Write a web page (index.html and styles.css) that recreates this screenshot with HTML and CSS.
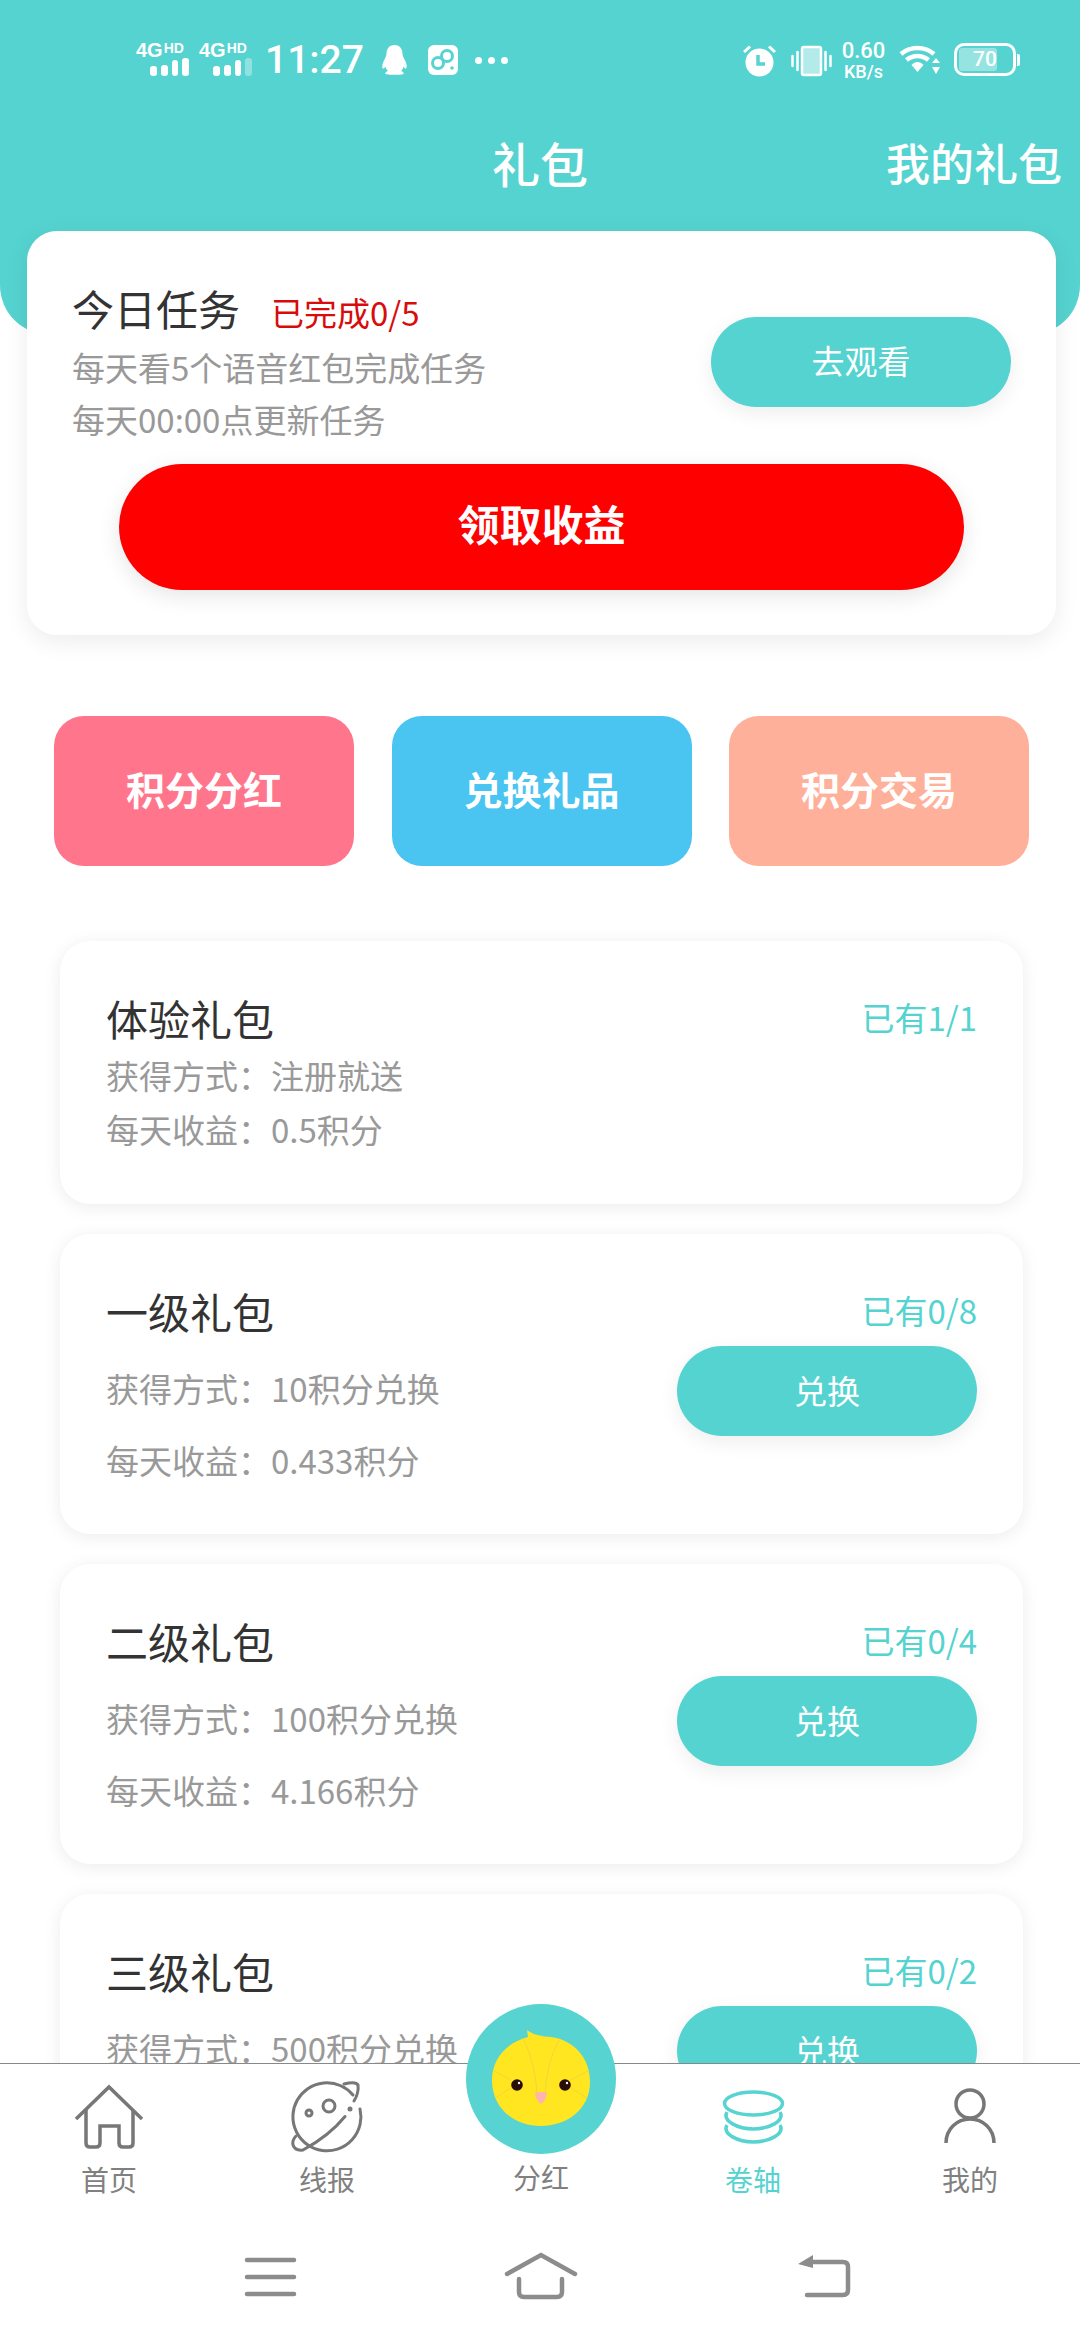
FILE: index.html
```html
<!DOCTYPE html>
<html lang="zh-CN">
<head>
    <meta charset="UTF-8">
    <meta name="viewport" content="width=device-width, initial-scale=1.0">
    <title>礼包</title>
    <link rel="stylesheet" href="styles.css">
</head>
<body>
<div class="page">
    <div class="scroll">
        <header class="header">
            <div class="status-bar">
                <div class="status-left">
                    <div class="signal">
                        <div class="signal-text">4G<span class="signal-hd">HD</span></div>
                        <div class="bars"><i class="b1"></i><i class="b2"></i><i class="b3"></i><i class="b4"></i></div>
                    </div>
                    <div class="signal">
                        <div class="signal-text">4G<span class="signal-hd">HD</span></div>
                        <div class="bars"><i class="b1"></i><i class="b2"></i><i class="b3"></i><i class="b4 dim"></i></div>
                    </div>
                    <span class="time">11:27</span>
                    <svg class="ic-qq" width="25" height="30" viewBox="0 0 25 30"><path fill="#fff" d="M12.5 0C18 0 20.500 4 20.500 9C20.500 11 22 13 23.500 16.500C25 20 25 23 24 23.500C23 24 22 22.500 21.500 21.500C21 23.500 20 25 19 26C21 26.500 22 27.500 21.500 29C21 30 4 30 3.500 29C3 27.500 4 26.500 6 26C5 25 4 23.500 3.500 21.500C3 22.500 2 24 1 23.500C0 23 0 20 1.500 16.500C3 13 4.500 11 4.500 9C4.500 4 7 0 12.500 0Z"/></svg>
                    <svg class="ic-app" width="30" height="30" viewBox="0 0 30 30"><rect width="30" height="30" rx="6" fill="#fff"/><circle cx="10" cy="18" r="5.500" fill="none" stroke="#57d4d1" stroke-width="3"/><circle cx="19" cy="11" r="5.500" fill="none" stroke="#57d4d1" stroke-width="3"/><circle cx="24" cy="23" r="1.800" fill="#57d4d1"/></svg>
                    <div class="dots"><i></i><i></i><i></i></div>
                </div>
                <div class="status-right">
                    <svg class="ic-alarm" width="33" height="32" viewBox="0 0 33 32"><circle cx="16.500" cy="17.500" r="14" fill="#fff"/><path d="M1 7L7 1.500M32 7L26 1.500" stroke="#fff" stroke-width="3"/><path d="M15 10V19H22" fill="none" stroke="#57d4d1" stroke-width="3.500"/></svg>
                    <svg class="ic-vibrate" width="41" height="32" viewBox="0 0 41 32"><rect x="11" y="2" width="19" height="28" rx="2" fill="#fff" fill-opacity=".55" stroke="#fff" stroke-width="2.500"/><path d="M1.500 11V21M6.500 7V25M34.500 7V25M39.500 11V21" stroke="#fff" stroke-width="2.500" stroke-linecap="round"/></svg>
                    <div class="speed"><span class="speed-num">0.60</span><span class="speed-unit">KB/s</span></div>
                    <svg class="ic-wifi" width="42" height="30" viewBox="0 0 42 30"><path d="M2 9C11 1 26 1 35 9M7.500 15C14 9.500 23 9.500 29.500 15" fill="none" stroke="#fff" stroke-width="4.500"/><path d="M12.500 20C16 16 21 16 24.500 20L18.500 27Z" fill="#fff"/><path d="M37 13L41 18H33ZM37 29L33 22H41Z" fill="#fff"/></svg>
                    <div class="battery">
                        <div class="battery-body"><div class="battery-fill"></div><span class="battery-num">70</span></div>
                        <div class="battery-nub"></div>
                    </div>
                </div>
            </div>
            <div class="title-bar">
                <h1 class="title">礼包</h1>
                <a class="title-link">我的礼包</a>
            </div>
        </header>

        <section class="task-card">
            <div class="task-row">
                <div class="task-info">
                    <div class="task-head"><span class="task-title">今日任务</span><span class="task-done">已完成0/5</span></div>
                    <p class="task-sub">每天看5个语音红包完成任务</p>
                    <p class="task-sub">每天00:00点更新任务</p>
                </div>
                <button class="btn-teal btn-watch">去观看</button>
            </div>
            <button class="btn-red">领取收益</button>
        </section>

        <nav class="tiles">
            <a class="tile tile-pink">积分分红</a>
            <a class="tile tile-blue">兑换礼品</a>
            <a class="tile tile-orange">积分交易</a>
        </nav>

        <section class="gift-list">
            <div class="gift-card gift-card-free">
                <div class="gift-head"><span class="gift-title">体验礼包</span><span class="gift-owned">已有1/1</span></div>
                <div class="gift-body">
                    <div class="gift-info">
                        <p class="gift-line">获得方式：注册就送</p>
                        <p class="gift-line">每天收益：0.5积分</p>
                    </div>
                </div>
            </div>
            <div class="gift-card">
                <div class="gift-head"><span class="gift-title">一级礼包</span><span class="gift-owned">已有0/8</span></div>
                <div class="gift-body">
                    <div class="gift-info">
                        <p class="gift-line">获得方式：10积分兑换</p>
                        <p class="gift-line">每天收益：0.433积分</p>
                    </div>
                    <button class="btn-teal btn-swap">兑换</button>
                </div>
            </div>
            <div class="gift-card">
                <div class="gift-head"><span class="gift-title">二级礼包</span><span class="gift-owned">已有0/4</span></div>
                <div class="gift-body">
                    <div class="gift-info">
                        <p class="gift-line">获得方式：100积分兑换</p>
                        <p class="gift-line">每天收益：4.166积分</p>
                    </div>
                    <button class="btn-teal btn-swap">兑换</button>
                </div>
            </div>
            <div class="gift-card">
                <div class="gift-head"><span class="gift-title">三级礼包</span><span class="gift-owned">已有0/2</span></div>
                <div class="gift-body">
                    <div class="gift-info">
                        <p class="gift-line">获得方式：500积分兑换</p>
                        <p class="gift-line">每天收益：20积分</p>
                    </div>
                    <button class="btn-teal btn-swap">兑换</button>
                </div>
            </div>
        </section>
    </div>

    <footer class="tabbar">
        <a class="tab">
            <svg class="tab-icon" width="80" height="70" viewBox="0 0 80 70" fill="none" stroke="#777" stroke-width="3.500">
                <path d="M7 36L40 4L73 36"/>
                <path d="M17 27V60q0 4 4 4h6q4 0 4-4V43H50V60q0 4 4 4h6q4 0 4-4V27"/>
            </svg>
            <span class="tab-label">首页</span>
        </a>
        <a class="tab">
            <svg class="tab-icon" width="80" height="70" viewBox="0 0 80 70" fill="none" stroke="#777" stroke-width="3" stroke-linecap="round">
                <path d="M66 12A34 34 0 1 0 73 26"/>
                <circle cx="42" cy="23" r="6"/>
                <circle cx="22" cy="30" r="3"/>
                <path d="M58 33.500Q42 53 16 67Q8 68 6 62Q5 57 9 53"/>
                <path d="M57 1Q69 -2 71 2Q72 10 67 18"/>
                <circle cx="63" cy="26" r="1" fill="#777"/>
            </svg>
            <span class="tab-label">线报</span>
        </a>
        <a class="tab tab-mid">
            <svg class="chick" width="150" height="150" viewBox="0 0 150 150">
                <circle cx="75" cy="75" r="75" fill="#57d4d1"/>
                <path fill="#ffe620" d="M61 26Q68 32 85 33C108 36 124 54 124 78C124 106 100 122 75 122C50 122 26 106 26 76C26 54 42 38 62 33Z"/>
                <path fill="none" stroke="#efd63c" stroke-width="1" d="M57 34Q70 60 71 92M93 36Q80 60 79 92M27 66L45 76M29 94L45 84M123 66L105 76M121 94L105 84"/>
                <circle cx="51" cy="81" r="5.800" fill="#2a0d05"/>
                <circle cx="99" cy="81" r="5.800" fill="#2a0d05"/>
                <circle cx="53" cy="79" r="1.200" fill="#fff"/>
                <circle cx="101" cy="79" r="1.200" fill="#fff"/>
                <path fill="#ffb3ae" d="M69 89Q75 87 81 89Q80 97 75 100Q70 97 69 89Z"/>
            </svg>
            <span class="tab-label">分红</span>
        </a>
        <a class="tab tab-active">
            <svg class="tab-icon" width="80" height="70" viewBox="0 0 80 70" fill="none" stroke="#57d4d1" stroke-width="3.500">
                <ellipse cx="40.500" cy="20.500" rx="29" ry="11.500"/>
                <path d="M14 29C9 38 25 46 40.500 46S72 38 67 29"/>
                <path d="M14 42C9 51 25 59 40.500 59S72 51 67 42"/>
            </svg>
            <span class="tab-label">卷轴</span>
        </a>
        <a class="tab">
            <svg class="tab-icon" width="80" height="70" viewBox="0 0 80 70" fill="none" stroke="#777" stroke-width="3.500">
                <circle cx="40" cy="21" r="14"/>
                <path d="M16 60C16 46 27 36 40 36S64 46 64 60"/>
            </svg>
            <span class="tab-label">我的</span>
        </a>
    </footer>

    <div class="navbar">
        <svg width="80" height="60" viewBox="0 0 80 60" fill="none" stroke="#8c8c8c" stroke-width="4.500" stroke-linecap="round">
            <path d="M17 13H64M17 30H64M17 47H64"/>
        </svg>
        <svg width="80" height="60" viewBox="0 0 80 60" fill="none" stroke="#8c8c8c" stroke-width="4.500" stroke-linecap="round">
            <path d="M6 27L40 8L74 27"/>
            <path d="M18 32V45q0 5 5 5H56q5 0 5-5V32"/>
        </svg>
        <svg width="80" height="60" viewBox="0 0 80 60" fill="none" stroke="#8c8c8c" stroke-width="4.500" stroke-linecap="round">
            <path d="M29 15H60q5 0 5 5V43q0 5-5 5H24"/>
            <path d="M15 17L30 8V21Z" fill="#8c8c8c" stroke="none"/>
        </svg>
    </div>
</div>
</body>
</html>
```

FILE: styles.css
```css
* {
    box-sizing: border-box;
}

body {
    margin: 0;
    padding: 0;
    background-color: #fff;
    font-family: "Noto Sans CJK SC", "Noto Sans", sans-serif;
    color: #333;
}

p,
h1 {
    margin: 0;
}

button {
    border: none;
    padding: 0;
    font-family: inherit;
}

.page {
    width: 1080px;
    height: 2340px;
    display: flex;
    flex-direction: column;
    overflow: hidden;
}

.scroll {
    height: 2063px;
    flex: none;
    overflow: hidden;
}

/* cabecera */
.header {
    height: 335px;
    background-color: #55d3d0;
    border-radius: 0 0 50px 50px;
    color: #fff;
}

.status-bar {
    height: 122px;
    padding: 43px 60px 0 136px;
    display: flex;
    justify-content: space-between;
    align-items: flex-start;
}

.status-left,
.status-right {
    display: flex;
    align-items: flex-start;
}

.signal {
    width: 53px;
    margin-right: 10px;
}

.signal-text {
    height: 15px;
    display: flex;
    font-family: "Liberation Sans", sans-serif;
    font-size: 20px;
    line-height: 15px;
    font-weight: 700;
}

.signal-hd {
    font-size: 14px;
    line-height: 10px;
    margin-left: 1px;
}

.bars {
    height: 18px;
    display: flex;
    align-items: flex-end;
    gap: 4px;
    margin-left: 14px;
}

.bars i {
    width: 7px;
    background-color: #fff;
    border-radius: 3px;
}

.bars .b1 { height: 10px; }
.bars .b2 { height: 11px; }
.bars .b3 { height: 16px; }
.bars .b4 { height: 18px; }
.bars .dim { opacity: 0.35; }

.time {
    margin: -6px 0 0 3px;
    width: 98px;
    font-family: Roboto, sans-serif;
    font-size: 39px;
    line-height: 46px;
    font-weight: 500;
}

.ic-qq {
    margin: 2px 0 0 19px;
}

.ic-app {
    margin: 2px 0 0 21px;
}

.dots {
    display: flex;
    gap: 6px;
    margin: 14px 0 0 17px;
}

.dots i {
    width: 7px;
    height: 7px;
    border-radius: 50%;
    background-color: #fff;
}

.ic-alarm {
    margin-top: 2px;
}

.ic-vibrate {
    margin: 2px 0 0 15px;
}

.speed {
    width: 47px;
    margin: -4px 0 0 8px;
    display: flex;
    flex-direction: column;
    align-items: center;
    font-family: Roboto, sans-serif;
    font-weight: 500;
}

.speed-num {
    font-size: 22px;
    line-height: 24px;
}

.speed-unit {
    font-size: 18px;
    line-height: 18px;
}

.ic-wifi {
    margin: 2px 0 0 12px;
}

.battery {
    display: flex;
    align-items: center;
    margin-left: 13px;
}

.battery-body {
    position: relative;
    width: 62px;
    height: 33px;
    border: 3px solid #fff;
    border-radius: 10px;
    overflow: hidden;
    text-align: center;
}

.battery-fill {
    position: absolute;
    left: 2px;
    top: 2px;
    bottom: 2px;
    width: 38px;
    background-color: rgba(255, 255, 255, 0.38);
    border-radius: 3px;
}

.battery-num {
    position: relative;
    font-family: Roboto, sans-serif;
    font-size: 21px;
    line-height: 27px;
    font-weight: 500;
    display: block;
}

.battery-nub {
    width: 3px;
    height: 12px;
    margin-left: 1px;
    background-color: #fff;
    border-radius: 0 2px 2px 0;
}

.title-bar {
    position: relative;
    height: 80px;
    text-align: center;
}

.title {
    font-size: 48px;
    line-height: 80px;
    font-weight: 500;
}

/* queda encima del titulo, a la derecha */
.title-link {
    position: absolute;
    right: 18px;
    top: 0;
    font-size: 44px;
    line-height: 80px;
    font-weight: 500;
}

/* tarjeta de tareas */
.task-card {
    position: relative;
    margin: -104px 24px 0 27px;
    padding: 47px 45px 45px 45px;
    background-color: #fff;
    border-radius: 30px;
    box-shadow: 0 6px 24px rgba(0, 0, 0, 0.08);
}

.task-row {
    display: flex;
    justify-content: space-between;
    align-items: flex-start;
}

.task-head {
    display: flex;
    align-items: baseline;
    height: 60px;
    line-height: 60px;
    margin-bottom: 4px;
}

.task-title {
    font-size: 42px;
    color: #333;
}

.task-done {
    font-size: 33px;
    color: #d80c0c;
    margin-left: 31px;
}

.task-sub {
    font-size: 33px;
    line-height: 50px;
    padding-bottom: 2px;
    color: #999;
}

.btn-teal {
    width: 300px;
    height: 90px;
    flex: none;
    border-radius: 45px;
    background-color: #55d3d0;
    color: #fff;
    font-size: 33px;
    box-shadow: 0 6px 20px rgba(0, 0, 0, 0.07);
}

.btn-watch {
    margin-top: 39px;
    padding-bottom: 5px;
}

.btn-red {
    display: block;
    width: 845px;
    height: 126px;
    margin: 18px 0 0 47px;
    padding-bottom: 10px;
    border-radius: 63px;
    background-color: #ff0000;
    color: #fff;
    font-size: 42px;
    font-weight: 700;
    box-shadow: 0 6px 22px rgba(0, 0, 0, 0.1);
}

/* botones de colores */
.tiles {
    display: grid;
    grid-template-columns: repeat(3, 300px);
    gap: 37.5px;
    margin: 81px 0 0 54px;
}

.tile {
    height: 150px;
    padding-bottom: 6px;
    border-radius: 30px;
    display: flex;
    justify-content: center;
    align-items: center;
    color: #fff;
    font-size: 39px;
    font-weight: 700;
}

.tile-pink { background-color: #ff768c; }
.tile-blue { background-color: #4ac4f0; }
.tile-orange { background-color: #ffb09a; }

/* lista de paquetes */
.gift-list {
    display: flex;
    flex-direction: column;
    gap: 30px;
    margin: 75px 57px 0 60px;
}

.gift-card {
    flex: none;
    padding: 46px 46px 38px 46px;
    background-color: #fff;
    border-radius: 30px;
    box-shadow: 0 3px 18px rgba(0, 0, 0, 0.08);
}

.gift-head {
    display: flex;
    justify-content: space-between;
    align-items: center;
    height: 60px;
}

.gift-title {
    font-size: 42px;
    color: #333;
}

.gift-owned {
    font-size: 33px;
    color: #55d3d0;
}

.gift-body {
    display: flex;
    justify-content: space-between;
    align-items: flex-start;
}

.gift-info {
    padding-top: 12px;
}

.gift-line {
    font-size: 33px;
    line-height: 72px;
    color: #999;
}

.btn-swap {
    margin-top: 6px;
    padding-bottom: 3px;
}

.gift-card-free {
    padding-bottom: 48px;
}

.gift-card-free .gift-info {
    padding-top: 1px;
}

.gift-card-free .gift-line {
    line-height: 54px;
}

/* barra inferior */
.tabbar {
    position: relative;
    flex: none;
    height: 150px;
    display: grid;
    grid-template-columns: 218px 218px 210px 214px 220px;
    padding-top: 19px;
    border-top: 1px solid #888;
    background-color: #fff;
}

.tab {
    position: relative;
    display: flex;
    flex-direction: column;
    align-items: center;
    color: #808080;
}

.tab-icon {
    display: block;
    overflow: visible;
}

.tab-label {
    font-size: 28px;
    line-height: 52px;
}

.tab-active {
    color: #55d3d0;
}

.tab-mid {
    padding-top: 68px;
}

/* sobresale de la barra */
.chick {
    position: absolute;
    top: -79px;
    left: 30px;
}

.navbar {
    flex: 1;
    display: grid;
    grid-template-columns: 240px 302px 262px;
    justify-items: center;
    align-items: start;
    padding: 34px 0 0 150px;
    background-color: #fff;
}
```
